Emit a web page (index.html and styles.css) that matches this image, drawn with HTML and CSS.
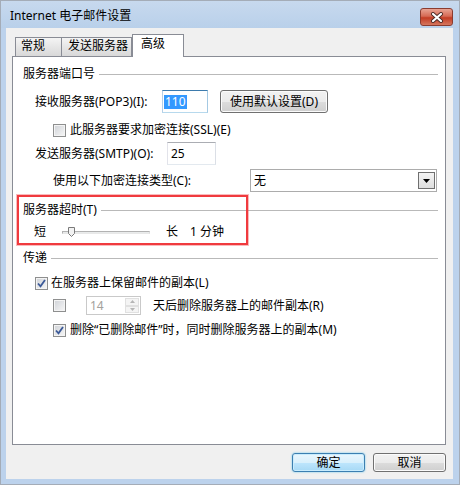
FILE: index.html
```html
<!DOCTYPE html>
<html lang="zh-CN">
<head>
    <meta charset="UTF-8">
    <title>Internet 电子邮件设置</title>
    <link rel="stylesheet" href="styles.css">
</head>
<body>
    <div class="window">
        <div class="titlebar">
            <span class="title">Internet 电子邮件设置</span>
            <span class="close">
                <svg width="14" height="11" viewBox="0 0 14 11">
                    <path d="M3 2 L11 9 M11 2 L3 9" stroke="#4a2a26" stroke-width="4" stroke-linecap="round"/>
                    <path d="M3 2 L11 9 M11 2 L3 9" stroke="#fff" stroke-width="2.2" stroke-linecap="round"/>
                </svg>
            </span>
        </div>
        <div class="client">
            <div class="tabs">
                <div class="tab tab-general">常规</div>
                <div class="tab tab-send">发送服务器</div>
                <div class="tab active">高级</div>
            </div>
            <div class="panel">
                <div class="group-head head-ports">服务器端口号</div>

                <div class="row row-pop3">
                    <span class="label label-pop3">接收服务器(POP3)(I):</span>
                    <span class="field field-pop3"><span class="selected">110</span></span>
                    <button class="btn btn-defaults">使用默认设置(D)</button>
                </div>

                <div class="row row-ssl">
                    <span class="check"></span>
                    <span class="check-label">此服务器要求加密连接(SSL)(E)</span>
                </div>

                <div class="row row-smtp">
                    <span class="label label-smtp">发送服务器(SMTP)(O):</span>
                    <span class="field field-smtp">25</span>
                </div>

                <div class="row row-enc">
                    <span class="label">使用以下加密连接类型(C):</span>
                    <span class="select">
                        <span>无</span>
                        <span class="drop">
                            <svg width="7" height="4" viewBox="0 0 7 4"><path d="M0 0 H7 L3.5 4 Z" fill="#000"/></svg>
                        </span>
                    </span>
                </div>

                <div class="group-head head-timeout">服务器超时(T)</div>

                <div class="row row-slider">
                    <span>短</span>
                    <span class="track">
                        <svg class="thumb" width="7" height="10" viewBox="0 0 7 10">
                            <path d="M0.5 0.5 H6.5 V6.5 L3.5 9.5 L0.5 6.5 Z" fill="#f2f2f2" stroke="#7a7a7a"/>
                        </svg>
                    </span>
                    <span class="long">长</span>
                    <span class="minutes">1 分钟</span>
                </div>

                <div class="group-head head-delivery">传递</div>

                <div class="row row-keep">
                    <span class="check">
                        <svg width="11" height="11" viewBox="0 0 11 11"><path d="M2 5.5 L4.5 8.3 L9 2" fill="none" stroke="#3b5998" stroke-width="1.8"/></svg>
                    </span>
                    <span class="check-label">在服务器上保留邮件的副本(L)</span>
                </div>

                <div class="row row-days">
                    <span class="check"></span>
                    <span class="spin">
                        <span class="spin-value">14</span>
                        <span class="spin-btns">
                            <span class="spin-btn"><svg width="5" height="3" viewBox="0 0 5 3"><path d="M0 3 H5 L2.5 0 Z" fill="#b5b5b5"/></svg></span>
                            <span class="spin-btn"><svg width="5" height="3" viewBox="0 0 5 3"><path d="M0 0 H5 L2.5 3 Z" fill="#b5b5b5"/></svg></span>
                        </span>
                    </span>
                    <span class="days-label">天后删除服务器上的邮件副本(R)</span>
                </div>

                <div class="row row-remove">
                    <span class="check">
                        <svg width="11" height="11" viewBox="0 0 11 11"><path d="M2 5.5 L4.5 8.3 L9 2" fill="none" stroke="#3b5998" stroke-width="1.8"/></svg>
                    </span>
                    <span class="check-label">删除“已删除邮件”时，同时删除服务器上的副本(M)</span>
                </div>

                <div class="highlight"></div>
            </div>
            <div class="actions">
                <button class="btn btn-ok">确定</button>
                <button class="btn btn-cancel">取消</button>
            </div>
        </div>
    </div>
</body>
</html>
```

FILE: styles.css
```css
body {
    margin: 0;
    font-family: "Noto Sans", "Noto Sans CJK SC", sans-serif;
    font-size: 12px;
    line-height: 16px;
    color: #000;
}

.window {
    width: 460px;
    height: 485px;
    box-sizing: border-box;
    border: 1px solid #a4acb7;
    background-color: #bcd2ec;
}

.titlebar {
    display: flex;
    justify-content: space-between;
    align-items: flex-start;
    height: 27px;
    padding: 0 6px 0 9px;
    background: linear-gradient(#c7d9ee, #b9d0ea);
}

.title {
    margin-top: 7px;
}

.close {
    display: flex;
    align-items: center;
    justify-content: center;
    width: 33px;
    height: 18px;
    margin-top: 7px;
    box-sizing: border-box;
    border: 1px solid #8b3c30;
    border-radius: 3px;
    background: linear-gradient(#e8a393, #d66a55 45%, #c33c24 55%, #d5765d);
}

.client {
    display: flex;
    flex-direction: column;
    height: 451px;
    margin: 0 6px 0 5px;
    background-color: #f0f0f0;
}

/* tabs */
.tabs {
    display: flex;
    align-items: flex-end;
    height: 22px;
    margin-top: 6px;
    padding-left: 9px;
}

.tab {
    height: 19px;
    box-sizing: border-box;
    padding-left: 5px;
    border: 1px solid #898c95;
    border-bottom: none;
    background: linear-gradient(#f4f4f4, #e6e6e6 50%, #d8d8d8);
}

.tab-general {
    width: 47px;
}

.tab-send {
    width: 70px;
    border-left: none;
    padding-left: 6px;
}

.tab.active {
    position: relative;
    z-index: 1;
    width: 52px;
    height: 23px;
    margin-bottom: -1px;
    padding: 1px 0 0 8px;
    background: #fff;
}

.panel {
    position: relative;
    height: 389px;
    margin: 0 7px 0 6px;
    box-sizing: border-box;
    border: 1px solid #898c95;
    background-color: #fff;
}

/* group headings with rule */
.group-head {
    display: flex;
    align-items: center;
    gap: 4px;
    height: 16px;
    padding: 0 7px 0 10px;
}

.group-head::after {
    content: "";
    flex: 1;
    border-top: 1px solid #b9b9b9;
}

.head-ports { margin-top: 9px; }
.head-timeout { margin-top: 10px; }
.head-delivery { margin-top: 10px; }

.row {
    display: flex;
    align-items: center;
}

.row-pop3 { height: 23px; margin-top: 8px; padding-left: 22px; }
.row-ssl { height: 18px; margin-top: 8px; padding-left: 40px; }
.row-smtp { height: 23px; margin-top: 3px; padding-left: 22px; }
.row-enc { height: 23px; margin-top: 4px; padding: 0 8px 0 40px; }
.row-slider { height: 16px; margin-top: 6px; padding-left: 21px; }
.row-keep { height: 16px; margin-top: 9px; padding-left: 22px; }
.row-days { height: 19px; margin-top: 5px; padding-left: 40px; }
.row-remove { height: 16px; margin-top: 7px; padding-left: 40px; }

.label-pop3 { width: 127px; }
.label-smtp { width: 132px; }

.field {
    display: flex;
    align-items: center;
    height: 23px;
    box-sizing: border-box;
    border: 1px solid;
    border-color: #abadb3 #dbdfe6 #e3e9ef #e2e3ea;
    background: #fff;
}

.field-pop3 {
    width: 46px;
    padding-left: 1px;
    border-color: #3d7bad #a4c9e3 #b7d9ed #b5cfe7;
}

.field-pop3 .selected {
    padding: 0 1px;
    line-height: 14px;
    background-color: #3399ff;
    color: #fff;
}

.field-smtp {
    width: 49px;
    padding-left: 3px;
}

.btn {
    box-sizing: border-box;
    padding: 0;
    border: 1px solid #707070;
    border-radius: 3px;
    background: linear-gradient(#f2f2f2, #ebebeb 50%, #dddddd 50%, #cfcfcf);
    box-shadow: inset 0 0 0 1px #fbfbfb;
    font: inherit;
    color: #000;
}

.btn-defaults {
    width: 108px;
    height: 23px;
    margin-left: 12px;
}

/* checkboxes */
.check {
    display: flex;
    align-items: center;
    justify-content: center;
    width: 13px;
    height: 13px;
    box-sizing: border-box;
    border: 1px solid #8e8f8f;
    background: linear-gradient(135deg, #cfd2d7, #f7f7f7);
    box-shadow: inset 0 0 0 1px #f4f4f4;
}

.check-label {
    margin-left: 3px;
}

.row-ssl .check-label,
.row-remove .check-label {
    margin-left: 4px;
}

.select {
    display: flex;
    align-items: center;
    justify-content: space-between;
    width: 187px;
    height: 23px;
    margin-left: auto;
    padding: 0 1px 0 3px;
    box-sizing: border-box;
    border: 1px solid #acacac;
}

.drop {
    display: flex;
    align-items: center;
    justify-content: center;
    width: 17px;
    height: 17px;
    box-sizing: border-box;
    border: 1px solid #6f6f6f;
    background: linear-gradient(#f3f3f3, #dedede);
}

/* slider */
.track {
    position: relative;
    width: 88px;
    height: 3px;
    margin-left: 16px;
    box-sizing: border-box;
    border: 1px solid;
    border-color: #b2b2b2 #dcdcdc #e8e8e8 #b2b2b2;
    background-color: #e9ebeb;
}

.thumb {
    position: absolute;
    left: 5px;
    top: -5px;
}

.long { margin-left: 16px; }
.minutes { margin-left: 12px; }

/* spinner */
.spin {
    display: flex;
    justify-content: space-between;
    width: 55px;
    height: 19px;
    margin-left: 20px;
    box-sizing: border-box;
    border: 1px solid #c9c9c9;
}

.spin-value {
    padding-left: 3px;
    line-height: 17px;
    color: #a3a19c;
}

.spin-btns {
    display: flex;
    flex-direction: column;
    width: 14px;
    margin: 1px 1px 1px 0;
}

.spin-btn {
    display: flex;
    align-items: center;
    justify-content: center;
    flex: 1;
    border: 1px solid #e0e0e0;
    background: #f4f4f4;
}

.days-label {
    margin-left: 12px;
}

.highlight {
    position: absolute;
    left: 4px;
    top: 138px;
    width: 231px;
    height: 50px;
    box-sizing: border-box;
    border: 2px solid #f03a3e;
    box-shadow: 0 0 0 1px rgba(240, 58, 62, 0.35);
}

.actions {
    display: flex;
    justify-content: flex-end;
    gap: 8px;
    margin-top: 8px;
    padding-right: 7px;
}

.btn-ok,
.btn-cancel {
    width: 73px;
    height: 19px;
}

.btn-ok {
    border-color: #3c7fb1;
    background: linear-gradient(#eaf6fd, #d9f0fc 50%, #bee6fd 50%, #a7d9f5);
    box-shadow: inset 0 0 0 1px #c9ecfd, 0 0 2px #5fc4ec;
}
```
